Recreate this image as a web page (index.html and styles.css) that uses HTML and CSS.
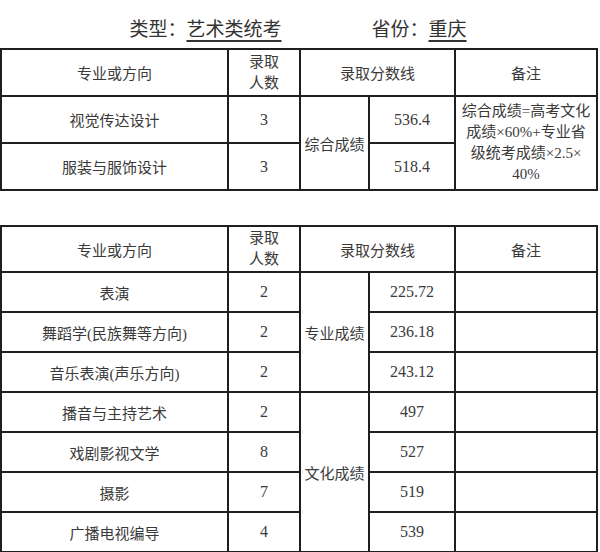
FILE: index.html
```html
<!DOCTYPE html>
<html lang="zh-CN">
<head>
<meta charset="utf-8">
<title>艺术类统考 重庆</title>
<link rel="stylesheet" href="styles.css">
</head>
<body>
<div class="page">
  <div class="title">
    <span class="group">类型：<span class="val">艺术类统考</span></span>
    <span class="group">省份：<span class="val">重庆</span></span>
  </div>

  <table class="grid t1">
    <colgroup>
      <col class="c1"><col class="c2"><col class="c3"><col class="c4"><col class="c5">
    </colgroup>
    <tr class="head">
      <td>专业或方向</td>
      <td class="two">录取<br>人数</td>
      <td colspan="2">录取分数线</td>
      <td>备注</td>
    </tr>
    <tr class="r1">
      <td>视觉传达设计</td>
      <td class="num">3</td>
      <td rowspan="2" class="kind">综合成绩</td>
      <td class="num">536.4</td>
      <td rowspan="2" class="note">综合成绩=高考文化<br>成绩×60%+专业省<br>级统考成绩×2.5×<br>40%</td>
    </tr>
    <tr class="r1">
      <td>服装与服饰设计</td>
      <td class="num">3</td>
      <td class="num">518.4</td>
    </tr>
  </table>

  <table class="grid t2">
    <colgroup>
      <col class="c1"><col class="c2"><col class="c3"><col class="c4"><col class="c5">
    </colgroup>
    <tr class="head2">
      <td>专业或方向</td>
      <td class="two">录取<br>人数</td>
      <td colspan="2">录取分数线</td>
      <td>备注</td>
    </tr>
    <tr class="r2">
      <td>表演</td>
      <td class="num">2</td>
      <td rowspan="3" class="kind">专业成绩</td>
      <td class="num">225.72</td>
      <td></td>
    </tr>
    <tr class="r2">
      <td>舞蹈学(民族舞等方向)</td>
      <td class="num">2</td>
      <td class="num">236.18</td>
      <td></td>
    </tr>
    <tr class="r2">
      <td>音乐表演(声乐方向)</td>
      <td class="num">2</td>
      <td class="num">243.12</td>
      <td></td>
    </tr>
    <tr class="r2">
      <td>播音与主持艺术</td>
      <td class="num">2</td>
      <td rowspan="4" class="kind">文化成绩</td>
      <td class="num">497</td>
      <td></td>
    </tr>
    <tr class="r2">
      <td>戏剧影视文学</td>
      <td class="num">8</td>
      <td class="num">527</td>
      <td></td>
    </tr>
    <tr class="r2">
      <td>摄影</td>
      <td class="num">7</td>
      <td class="num">519</td>
      <td></td>
    </tr>
    <tr class="r2">
      <td>广播电视编导</td>
      <td class="num">4</td>
      <td class="num">539</td>
      <td></td>
    </tr>
  </table>
</div>
</body>
</html>
```

FILE: styles.css
```css
html, body {
  margin: 0;
  padding: 0;
  background: #ffffff;
}

body {
  font-family: "Liberation Serif", "Noto Sans CJK SC", serif;
  color: #3a3a3a;
}

.page {
  width: 596px;
}

.title {
  box-sizing: border-box;
  height: 48px;
  padding-top: 16px;
  display: flex;
  justify-content: center;
  gap: 90px;
  font-family: "Noto Sans CJK SC", sans-serif;
  font-size: 19px;
  line-height: 24px;
  color: #333;
}

.val {
  text-decoration: underline;
  text-decoration-thickness: 1.5px;
  text-underline-offset: 4px;
}

.grid {
  width: 596px;
  border-collapse: collapse;
  table-layout: fixed;
  font-size: 15px;
}

.grid td {
  border: 2px solid #1e1e1e;
  padding: 0;
  text-align: center;
  vertical-align: middle;
}

.c1 { width: 227px; }
.c2 { width: 72px; }
.c3 { width: 69px; }
.c4 { width: 86px; }
.c5 { width: 142px; }

.two {
  line-height: 21px;
}

.num {
  font-size: 16px;
}

.note {
  line-height: 21px;
  padding-top: 2px;
}

.head td { height: 45px; }
.r1 td { height: 45px; }

.t2 {
  margin-top: 34px;
}

.head2 td { height: 44px; }
.r2 td { height: 38px; }
```
